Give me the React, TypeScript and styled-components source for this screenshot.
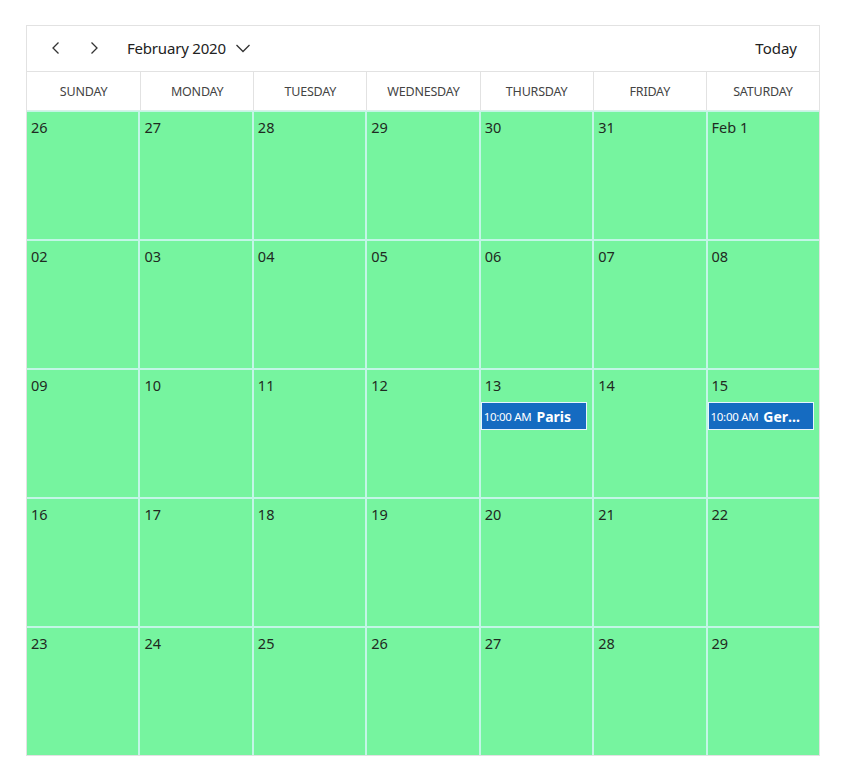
import { memo } from "react";
import styled, { createGlobalStyle } from "styled-components";

const days = ["SUNDAY", "MONDAY", "TUESDAY", "WEDNESDAY", "THURSDAY", "FRIDAY", "SATURDAY"];

interface IEvent {
  time: string;
  title: string;
}

interface IDay {
  label: string;
  event?: IEvent;
}

const labels = [
  "26", "27", "28", "29", "30", "31", "Feb 1",
  "02", "03", "04", "05", "06", "07", "08",
  "09", "10", "11", "12", "13", "14", "15",
  "16", "17", "18", "19", "20", "21", "22",
  "23", "24", "25", "26", "27", "28", "29",
];

const cells: IDay[] = labels.map(label => ({ label }));
cells[18].event = { time: "10:00 AM", title: "Paris" };
cells[20].event = { time: "10:00 AM", title: "Germany" };

const ChevronLeft = () => (
  <svg width="16" height="16" viewBox="0 0 16 16" fill="none">
    <path d="M10.5 2.5 L5 8 L10.5 13.5" stroke="#333" strokeWidth="1.3" />
  </svg>
);

const ChevronRight = () => (
  <svg width="16" height="16" viewBox="0 0 16 16" fill="none">
    <path d="M5.5 2.5 L11 8 L5.5 13.5" stroke="#333" strokeWidth="1.3" />
  </svg>
);

const ChevronDown = () => (
  <svg width="18" height="18" viewBox="0 0 18 18" fill="none">
    <path d="M2.5 6 L9 12.5 L15.5 6" stroke="#333" strokeWidth="1.3" />
  </svg>
);

const SchedulerComponent = () => {
  return (
    <Wrapper>
      <Toolbar>
        <NavButton><ChevronLeft /></NavButton>
        <NavButton><ChevronRight /></NavButton>
        <MonthPicker>
          February 2020
          <ChevronDown />
        </MonthPicker>
        <Spacer />
        <TodayButton>Today</TodayButton>
      </Toolbar>

      <DayHeader>
        { days.map(day => (
          <DayName key={ day }>{ day }</DayName>
        )) }
      </DayHeader>

      <Grid>
        { cells.map((cell, i) => (
          <Cell key={ i }>
            <DateLabel>{ cell.label }</DateLabel>
            { cell.event && (
              <Appointment>
                <Time>{ cell.event.time }</Time>
                <Title>{ cell.event.title }</Title>
              </Appointment>
            ) }
          </Cell>
        )) }
      </Grid>
    </Wrapper>
  );
};

const GlobalStyle = createGlobalStyle`
  body {
    margin: 0;
    background: #fff;
    font-family: "Noto Sans", "Open Sans", sans-serif;
  }
`;

const Wrapper = styled.div`
  margin: 25px 0 0 26px;
  width: 794px;
  border: 1px solid #e2e2e2;
  box-sizing: border-box;
  display: flex;
  flex-direction: column;
`;

const Toolbar = styled.div`
  height: 46px;
  display: flex;
  align-items: center;
  padding: 0 22px 2px 10px;
  box-sizing: border-box;
  border-bottom: 1px solid #e2e2e2;
  color: #222;
`;

const NavButton = styled.div`
  width: 38px;
  height: 32px;
  display: flex;
  align-items: center;
  justify-content: center;
`;

const MonthPicker = styled.div`
  display: flex;
  align-items: center;
  gap: 8px;
  margin-left: 14px;
  font-size: 15px;
  color: #222;
  letter-spacing: -0.2px;
`;

const Spacer = styled.div`
  flex: 1;
`;

const TodayButton = styled.div`
  font-size: 15px;
  color: #222;
`;

const DayHeader = styled.div`
  display: grid;
  grid-template-columns: repeat(7, 1fr);
  height: 38px;
`;

const DayName = styled.div`
  display: flex;
  align-items: center;
  justify-content: center;
  font-size: 12.5px;
  color: #444;
  border-left: 1px solid #e2e2e2;
  letter-spacing: -0.2px;

  &:first-child {
    border-left: none;
  }
`;

const Grid = styled.div`
  display: grid;
  grid-template-columns: repeat(7, 1fr);
  grid-auto-rows: 127px;
  gap: 2px;
  padding: 1px 0 0;
  background-color: #c2f6e6;
  border-top: 1px solid #d8f0e8;
`;

const Cell = styled.div`
  background-color: #76f49f;
  display: flex;
  flex-direction: column;
  align-items: flex-start;
  padding: 5px 0 0 1px;
  min-width: 0;
`;

const DateLabel = styled.div`
  font-size: 14.5px;
  color: #1f2a22;
  padding-left: 3px;
  line-height: 20px;
  height: 20px;
`;

const Appointment = styled.div`
  margin: 7px 0 0 -1px;
  width: 106px;
  height: 28px;
  box-sizing: border-box;
  border: 1px solid #e8f4ff;
  background-color: #156bc1;
  color: #fff;
  display: flex;
  align-items: center;
  gap: 5px;
  padding: 0 3px 0 2px;
  white-space: nowrap;
  overflow: hidden;
`;

const Time = styled.span`
  font-size: 11.5px;
  letter-spacing: -0.3px;
`;

const Title = styled.span`
  font-size: 14px;
  font-weight: bold;
  overflow: hidden;
  text-overflow: ellipsis;
  min-width: 0;
`;

const Scheduler = memo(SchedulerComponent);

export default function App() {
  return (
    <>
      <GlobalStyle />
      <Scheduler />
    </>
  );
}
